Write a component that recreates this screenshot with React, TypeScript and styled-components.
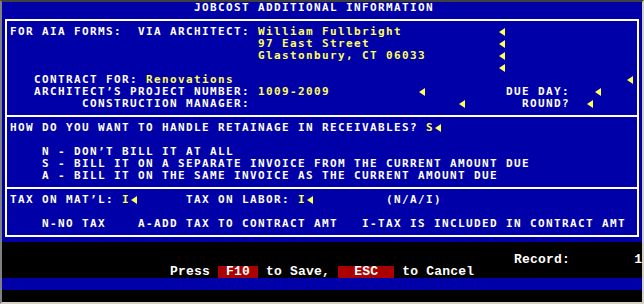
import React from "react";
import styled, { createGlobalStyle } from "styled-components";

// text-mode screen: 80 columns x 25 rows, 8x12 cells
const CELL = 8;

type Piece = {
  col: number;
  text?: string;
  tone?: "value" | "key";
  arrow?: boolean;
};

const GlobalStyle = createGlobalStyle`
  html, body {
    margin: 0;
    padding: 0;
    background: #000;
  }
`;

const Screen = styled.div`
  width: 640px;
  height: 300px;
  border-style: solid;
  border-width: 2px;
  border-color: #404040 #d4d0c8 #d4d0c8 #808080;
  background: #000;
  display: flex;
  flex-direction: column;
`;

const Panel = styled.div`
  height: 240px;
  background: #0000a8;
  display: flex;
  flex-direction: column;
`;

const Frame = styled.div`
  margin: 5px 3px 5px 3px;
  border: 2px solid #fff;
  display: flex;
  flex-direction: column;
`;

const Section = styled.div<{ $last?: boolean }>`
  padding: 5px 0 5px 3px;
  border-bottom: ${(p) => (p.$last ? "none" : "2px solid #fff")};
`;

const Line = styled.div`
  height: 12px;
  line-height: 12px;
  white-space: pre;
  font-family: "DejaVu Sans Mono", monospace;
  font-weight: bold;
  font-size: 11px;
  letter-spacing: ${CELL - 11 * 0.6021}px;
  color: #fff;
`;

const StatusLine = styled.div`
  height: 12px;
  line-height: 12px;
  white-space: pre;
  font-family: "Liberation Mono", monospace;
  font-weight: bold;
  font-size: 13px;
  letter-spacing: 0.2px;
  color: #fff;
`;

const Text = styled.span<{ $tone?: "value" | "key" }>`
  color: ${(p) => (p.$tone === "value" ? "#ffff55" : "#fff")};
  background: ${(p) => (p.$tone === "key" ? "#aa0000" : "transparent")};
  display: ${(p) => (p.$tone === "key" ? "inline-block" : "inline")};
  height: 12px;
`;

const BlueBar = styled.div`
  height: 12px;
  background: #0000a8;
`;

const Blank = styled.div`
  height: 12px;
`;

const PointerSvg = styled.svg`
  display: inline-block;
  vertical-align: top;
  width: ${CELL}px;
  height: 12px;
`;

const Pointer: React.FC = () => (
  <PointerSvg viewBox="0 0 8 12">
    <polygon points="1,6 7,2 7,10" fill="#ffff55" />
  </PointerSvg>
);

const renderPieces = (pieces: Piece[], start: number) => {
  let cur = start;
  const out: React.ReactNode[] = [];
  pieces.forEach((p, i) => {
    if (p.col > cur) {
      out.push(<span key={`s${i}`}>{" ".repeat(p.col - cur)}</span>);
    }
    if (p.arrow) {
      out.push(<Pointer key={i} />);
      cur = p.col + 1;
    } else {
      const text = p.text || "";
      out.push(
        <Text key={i} $tone={p.tone}>
          {text}
        </Text>
      );
      cur = p.col + text.length;
    }
  });
  return out;
};

const addressRows: Piece[][] = [
  [
    { col: 1, text: "FOR AIA FORMS:  VIA ARCHITECT:" },
    { col: 32, text: "William Fullbright", tone: "value" },
    { col: 62, arrow: true },
  ],
  [
    { col: 32, text: "97 East Street", tone: "value" },
    { col: 62, arrow: true },
  ],
  [
    { col: 32, text: "Glastonbury, CT 06033", tone: "value" },
    { col: 62, arrow: true },
  ],
  [{ col: 62, arrow: true }],
  [
    { col: 4, text: "CONTRACT FOR:" },
    { col: 18, text: "Renovations", tone: "value" },
    { col: 78, arrow: true },
  ],
  [
    { col: 4, text: "ARCHITECT’S PROJECT NUMBER:" },
    { col: 32, text: "1009-2009", tone: "value" },
    { col: 52, arrow: true },
    { col: 63, text: "DUE DAY:" },
    { col: 74, arrow: true },
  ],
  [
    { col: 10, text: "CONSTRUCTION MANAGER:" },
    { col: 57, arrow: true },
    { col: 65, text: "ROUND?" },
    { col: 73, arrow: true },
  ],
];

const retainageRows: Piece[][] = [
  [
    { col: 1, text: "HOW DO YOU WANT TO HANDLE RETAINAGE IN RECEIVABLES?" },
    { col: 53, text: "S", tone: "value" },
    { col: 54, arrow: true },
  ],
  [],
  [{ col: 5, text: "N - DON’T BILL IT AT ALL" }],
  [{ col: 5, text: "S - BILL IT ON A SEPARATE INVOICE FROM THE CURRENT AMOUNT DUE" }],
  [{ col: 5, text: "A - BILL IT ON THE SAME INVOICE AS THE CURRENT AMOUNT DUE" }],
];

const taxRows: Piece[][] = [
  [
    { col: 1, text: "TAX ON MAT’L:" },
    { col: 15, text: "I", tone: "value" },
    { col: 16, arrow: true },
    { col: 23, text: "TAX ON LABOR:" },
    { col: 37, text: "I", tone: "value" },
    { col: 38, arrow: true },
    { col: 48, text: "(N/A/I)" },
  ],
  [],
  [
    { col: 5, text: "N-NO TAX" },
    { col: 17, text: "A-ADD TAX TO CONTRACT AMT" },
    { col: 45, text: "I-TAX IS INCLUDED IN CONTRACT AMT" },
  ],
];

const FormLines: React.FC<{ rows: Piece[][] }> = ({ rows }) => (
  <>
    {rows.map((r, i) => (
      <Line key={i}>{renderPieces(r, 1)}</Line>
    ))}
  </>
);

export default function App() {
  return (
    <>
      <GlobalStyle />
      <Screen>
        <Panel>
          <Line>{renderPieces([{ col: 24, text: "JOBCOST ADDITIONAL INFORMATION" }], 0)}</Line>
          <Frame>
            <Section>
              <FormLines rows={addressRows} />
            </Section>
            <Section>
              <FormLines rows={retainageRows} />
            </Section>
            <Section $last>
              <FormLines rows={taxRows} />
            </Section>
          </Frame>
        </Panel>
        <Blank />
        <StatusLine>
          {renderPieces(
            [
              { col: 64, text: "Record:" },
              { col: 79, text: "1" },
            ],
            0
          )}
        </StatusLine>
        <StatusLine>
          {renderPieces(
            [
              { col: 21, text: "Press" },
              { col: 27, text: " F10 ", tone: "key" },
              { col: 33, text: "to Save," },
              { col: 42, text: "  ESC  ", tone: "key" },
              { col: 50, text: "to Cancel" },
            ],
            0
          )}
        </StatusLine>
        <BlueBar />
        <Blank />
      </Screen>
    </>
  );
}
